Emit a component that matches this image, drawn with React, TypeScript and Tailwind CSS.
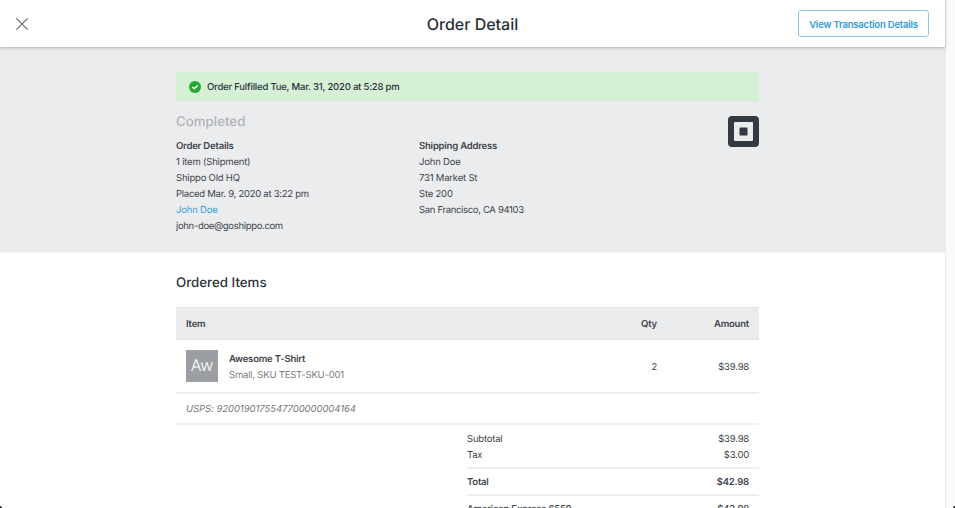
import React from "react";

const font = { fontFamily: '"Inter", "Liberation Sans", sans-serif' };

function Row({ children, className = "" }: { children: React.ReactNode; className?: string }) {
  return <div className={`h-4 leading-[18px] whitespace-nowrap ${className}`}>{children}</div>;
}

function Check() {
  return (
    <svg width="12" height="12" viewBox="0 0 12 12" className="shrink-0">
      <circle cx="6" cy="6" r="6" fill="#24a830" />
      <path d="M3.4 6.1 5.2 7.8 8.6 4.4" fill="none" stroke="#fff" strokeWidth="1.4" />
    </svg>
  );
}

function SquareLogo() {
  return (
    <svg width="31" height="31" viewBox="0 0 31 31" className="shrink-0">
      <path
        fillRule="evenodd"
        fill="#333a43"
        d="M4 0h23a4 4 0 0 1 4 4v23a4 4 0 0 1-4 4H4a4 4 0 0 1-4-4V4a4 4 0 0 1 4-4ZM7 6a1 1 0 0 0-1 1v17a1 1 0 0 0 1 1h17a1 1 0 0 0 1-1V7a1 1 0 0 0-1-1H7Z"
      />
      <rect x="11.5" y="11.5" width="8" height="8" rx="0.5" fill="#333a43" />
    </svg>
  );
}

export default function App() {
  return (
    <div style={font} className="relative flex h-[508px] w-[955px] overflow-hidden bg-white text-[9.5px] tracking-[-0.2px] text-[#3e444c] [text-rendering:geometricPrecision]">
      <div className="w-[945px] shrink-0">
        <header className="relative z-10 grid h-[47px] grid-cols-[1fr_auto_1fr] items-center bg-white pl-[16px] pr-[16px] shadow-[0_1px_3px_rgba(0,0,0,0.25)]">
          <svg width="12" height="12" viewBox="0 0 12 12" className="shrink-0">
            <path d="M0.4 0.4 11.6 11.6M11.6 0.4 0.4 11.6" stroke="#5d6269" strokeWidth="1.1" fill="none" />
          </svg>
          <h1 className="text-[16px] font-medium tracking-normal text-[#2a3039]">Order Detail</h1>
          <button className="flex h-[27px] w-[131px] items-center justify-center justify-self-end rounded-[3px] border border-[#8cc6e8] bg-white pt-[3px] font-semibold text-[#2f9bd6]">
            View Transaction Details
          </button>
        </header>

        <section className="h-[206px] border-b border-[#f6f6f7] bg-[#ebecee] pt-[25px]">
          <div className="ml-[176px] w-[583px]">
            <div className="flex h-[29px] items-center gap-[6px] bg-[#d5f0d4] pl-[13px] font-medium text-[#2a3039]">
              <Check />
              <span className="pt-[3px]">Order Fulfilled Tue, Mar. 31, 2020 at 5:28 pm</span>
            </div>
            <div className="flex justify-between">
              <div>
                <div className="mt-[12px] h-[18px] text-[13.3px] font-medium leading-[19px] tracking-normal text-[#b1b3b7]">Completed</div>
                <div className="mt-[7px] flex">
                  <div className="w-[243px]">
                    <Row className="font-semibold">Order Details</Row>
                    <Row>1 item (Shipment)</Row>
                    <Row>Shippo Old HQ</Row>
                    <Row className="tracking-[-0.27px]">Placed Mar. 9, 2020 at 3:22 pm</Row>
                    <Row className="text-[#3a9fd6]">John Doe</Row>
                    <Row className="tracking-[-0.33px]">john-doe@goshippo.com</Row>
                  </div>
                  <div>
                    <Row className="font-semibold">Shipping Address</Row>
                    <Row>John Doe</Row>
                    <Row>731 Market St</Row>
                    <Row>Ste 200</Row>
                    <Row className="tracking-[-0.33px]">San Francisco, CA 94103</Row>
                  </div>
                </div>
              </div>
              <div className="mt-[15px]">
                <SquareLogo />
              </div>
            </div>
          </div>
        </section>

        <section className="ml-[176px] w-[583px]">
          <h2 className="mt-[20px] h-[18px] text-[13.3px] font-medium leading-[20px] tracking-normal text-[#2a3039]">Ordered Items</h2>
          <div className="mt-[16px] flex h-[33px] items-center border-t border-b-2 border-t-[#dfe1e3] border-b-[#e3e5e7] bg-[#ebecee] px-[10px] pt-[5px] font-semibold">
            <div className="flex-1">Item</div>
            <div className="w-[40px] text-right">Qty</div>
            <div className="w-[92px] text-right">Amount</div>
          </div>
          <div className="flex h-[54px] items-center border-b-2 border-[#eeeff0] px-[10px]">
            <div className="flex h-[32px] w-[32px] shrink-0 items-center justify-center bg-[#9b9ea2] pb-[2px] text-[16px] font-light tracking-normal text-white">Aw</div>
            <div className="ml-[11px] flex-1 pt-[2px]">
              <Row className="font-semibold">Awesome T-Shirt</Row>
              <Row className="text-[#7a7e84]">Small, SKU TEST-SKU-001</Row>
            </div>
            <div className="w-[40px] pt-[4px] text-right">2</div>
            <div className="w-[92px] pt-[4px] text-right">$39.98</div>
          </div>
          <div className="flex h-[31px] items-center border-b-2 border-[#eeeff0] px-[10px] pt-[4px] italic tracking-[-0.05px] text-[#74787e]">
            USPS: 9200190175547700000004164
          </div>
          <div className="ml-[291px]">
            <div className="border-b-2 border-[#eeeff0] pb-[4px] pt-[6px]">
              <div className="flex justify-between pr-[10px]"><Row>Subtotal</Row><Row>$39.98</Row></div>
              <div className="flex justify-between pr-[10px]"><Row>Tax</Row><Row>$3.00</Row></div>
            </div>
            <div className="flex h-[27px] items-center justify-between border-b-2 border-[#eeeff0] pr-[10px] font-semibold">
              <Row>Total</Row><Row>$42.98</Row>
            </div>
            <div className="flex h-[25px] items-center justify-between pr-[10px] font-medium">
              <Row>American Express 6550</Row><Row>$42.98</Row>
            </div>
          </div>
        </section>
      </div>
      <div className="w-[10px] shrink-0 border-l border-[#e8e8e8] bg-[#fafafa]" />
      <div className="absolute bottom-0 left-0 h-[2px] w-[2px] rounded-tr-[2px] bg-[#222]" />
      <div className="absolute bottom-0 right-0 h-[2px] w-[2px] rounded-tl-[2px] bg-[#222]" />
    </div>
  );
}
